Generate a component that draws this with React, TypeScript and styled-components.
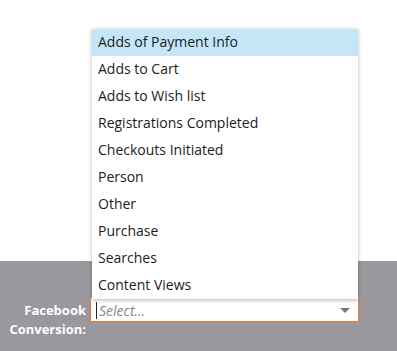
import React from "react";
import styled, { createGlobalStyle } from "styled-components";

const GlobalStyle = createGlobalStyle`
  body {
    margin: 0;
    font-family: "Open Sans", "Liberation Sans", sans-serif;
    background: #fff;
  }
`;

const Page = styled.div`
  width: 397px;
  height: 351px;
  display: flex;
  flex-direction: column;
  overflow: hidden;
`;

const TopArea = styled.div`
  height: 261px;
  background: #fff;
`;

const Panel = styled.div`
  flex: 1;
  background: #99989d;
  padding-top: 37px;
`;

const FieldRow = styled.div`
  display: flex;
  align-items: flex-start;
  gap: 4px;
`;

const Label = styled.label`
  width: 86px;
  text-align: right;
  color: #fff;
  font-weight: 700;
  font-size: 13px;
  line-height: 19px;
  margin-top: 3px;
`;

const SelectBox = styled.div`
  position: relative;
  width: 269px;
  height: 24px;
  box-sizing: border-box;
  border: 1px solid #ee7b24;
  border-top-color: #ddd;
  background: #fff;
  display: flex;
  align-items: center;
  padding: 0 6px 0 5px;
`;

const Placeholder = styled.span`
  flex: 1;
  font-size: 14px;
  font-style: italic;
  color: #858585;
  border-left: 1px solid #222;
  padding-left: 2px;
  line-height: 17px;
`;

const Arrow = styled.span`
  width: 0;
  height: 0;
  border-left: 5px solid transparent;
  border-right: 5px solid transparent;
  border-top: 5px solid #777;
  margin-right: 2px;
`;

const Menu = styled.ul`
  position: absolute;
  left: 1px;
  right: 0;
  bottom: 100%;
  margin: 0;
  padding: 0;
  list-style: none;
  background: #fff;
  box-shadow: 0 1px 4px rgba(0, 0, 0, 0.3);
`;

const Option = styled.li<{ $active?: boolean }>`
  height: 27px;
  line-height: 26px;
  padding-left: 6px;
  font-size: 14px;
  color: #1c1c1c;
  background: ${(p) => (p.$active ? "#c4e6f7" : "transparent")};
`;

const options = [
  "Adds of Payment Info",
  "Adds to Cart",
  "Adds to Wish list",
  "Registrations Completed",
  "Checkouts Initiated",
  "Person",
  "Other",
  "Purchase",
  "Searches",
  "Content Views",
];

const App: React.FC = () => {
  return (
    <Page>
      <GlobalStyle />
      <TopArea />
      <Panel>
        <FieldRow>
          <Label>
            Facebook
            <br />
            Conversion:
          </Label>
          <SelectBox>
            <Menu>
              {options.map((o, i) => (
                <Option key={o} $active={i === 0}>
                  {o}
                </Option>
              ))}
            </Menu>
            <Placeholder>Select...</Placeholder>
            <Arrow />
          </SelectBox>
        </FieldRow>
      </Panel>
    </Page>
  );
};

export default App;
